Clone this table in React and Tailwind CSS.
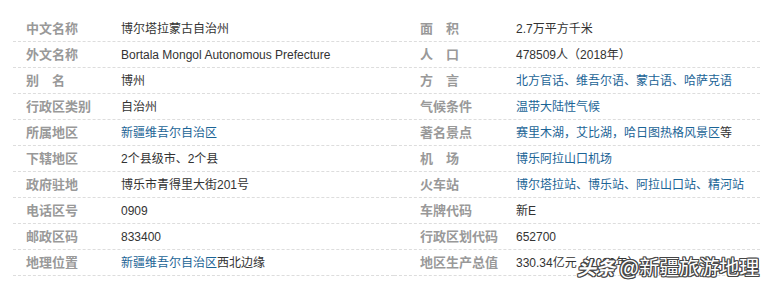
import React from "react";

const B = ({ children }) => <span className="text-[#1b6496]">{children}</span>;

const left = [
  ["中文名称", "博尔塔拉蒙古自治州"],
  ["外文名称", "Bortala Mongol Autonomous Prefecture"],
  ["别　名", "博州"],
  ["行政区类别", "自治州"],
  ["所属地区", <B>新疆维吾尔自治区</B>],
  ["下辖地区", "2个县级市、2个县"],
  ["政府驻地", "博乐市青得里大街201号"],
  ["电话区号", "0909"],
  ["邮政区码", "833400"],
  ["地理位置", <><B>新疆维吾尔自治区</B>西北边缘</>],
];

const right = [
  ["面　积", "2.7万平方千米"],
  ["人　口", "478509人（2018年）"],
  ["方　言", <B>北方官话、维吾尔语、蒙古语、哈萨克语</B>],
  ["气候条件", <B>温带大陆性气候</B>],
  ["著名景点", <><B>赛里木湖，艾比湖，哈日图热格风景区</B>等</>],
  ["机　场", <B>博乐阿拉山口机场</B>],
  ["火车站", <B>博尔塔拉站、博乐站、阿拉山口站、精河站</B>],
  ["车牌代码", "新E"],
  ["行政区划代码", "652700"],
  ["地区生产总值", "330.34亿元（2020年）"],
];

function Col({ rows, labelW, pl }) {
  return (
    <div className="flex flex-col">
      {rows.map(([k, v], i) => (
        <div
          key={i}
          className="flex items-center h-[26px] border-b border-dashed border-[#dddddd]"
        >
          <div
            className={`${labelW} ${pl} shrink-0 text-[13px] font-bold text-[#999] whitespace-nowrap`}
          >
            {k}
          </div>
          <div className="text-[12px] text-[#333] whitespace-nowrap">{v}</div>
        </div>
      ))}
    </div>
  );
}

export default function App() {
  return (
    <div
      className="relative w-[763px] h-[287px] bg-white overflow-hidden"
      style={{ fontFamily: '"Liberation Sans", "Noto Sans CJK SC", sans-serif' }}
    >
      <div className="grid grid-cols-[381px_366px] pl-[13px] pt-[16px]">
        <Col rows={left} labelW="w-[108px]" pl="pl-[13px]" />
        <Col rows={right} labelW="w-[122px]" pl="pl-[26px]" />
      </div>
      <div
        className="absolute left-[577px] top-[253px] flex items-baseline text-white whitespace-nowrap [text-shadow:1px_1px_0_#444,-1px_-1px_0_#444,1px_-1px_0_#444,-1px_1px_0_#444,0_1px_0_#444,0_-1px_0_#444,1px_0_0_#444,-1px_0_0_#444]"
      >
        <span className="text-[19px] italic font-bold mr-[4px]">头条</span>
        <span className="text-[20px]">@新疆旅游地理</span>
      </div>
    </div>
  );
}
